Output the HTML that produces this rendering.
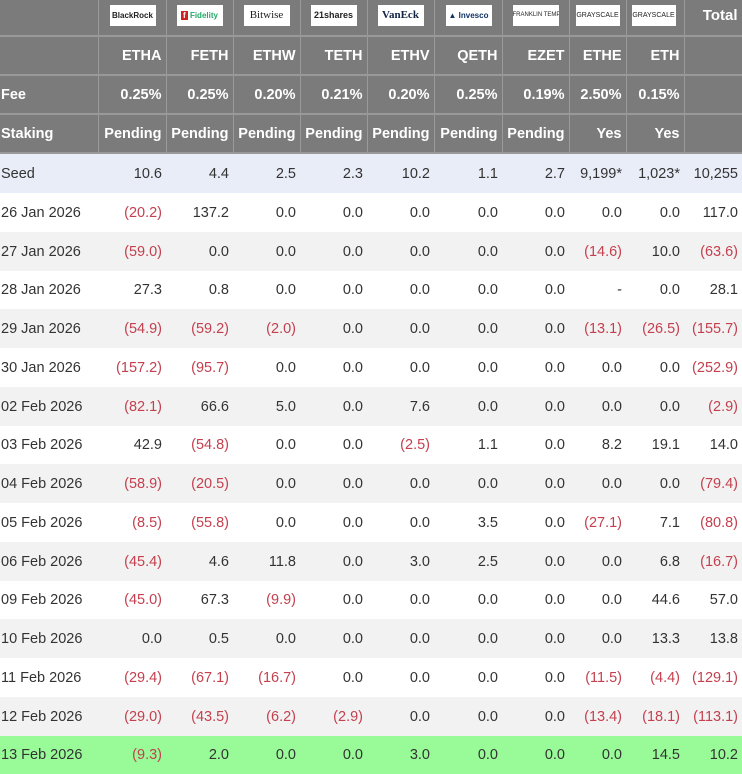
<!DOCTYPE html>
<html><head><meta charset="utf-8"><style>
body{margin:0;width:742px;height:773px;overflow:hidden;background:#fff;font-family:"Liberation Sans",Arial,sans-serif;}
table{border-collapse:collapse;table-layout:fixed;width:742px;}
td{padding:0 4px 0 0;text-align:right;font-size:14.5px;color:#333;white-space:nowrap;overflow:hidden;line-height:16px;}
td:first-child{text-align:left;padding-left:1px;}
tr.h td{background:#7b7b7b;color:#fff;font-weight:bold;border-right:1px solid #9a9a9a;border-bottom:2px solid #999;font-size:14.5px;}
tr.logo td{height:27px;vertical-align:top;padding-top:5px;}
tr.h2 td{height:37px;}
tr.d td{height:39px;}
tr.d.s td{height:38px;}
tr.d:nth-child(odd) td{background:#f2f2f2;}
tr.seed td{background:#e9edf7 !important;}
tr.last td{background:#98fb98 !important;}
.r{color:#c4404f;}
.lg{display:inline-block;background:#fff;width:46px;height:21px;font-size:8px;line-height:21px;text-align:center;color:#222;font-weight:bold;margin-right:6px;overflow:hidden;vertical-align:top;}
</style></head><body>
<table>
<colgroup><col style="width:98px"><col style="width:68px"><col style="width:67px"><col style="width:67px"><col style="width:67px"><col style="width:67px"><col style="width:68px"><col style="width:67px"><col style="width:57px"><col style="width:58px"><col style="width:58px"></colgroup>
<tr class="h logo"><td></td><td><span class="lg">BlackRock</span></td><td><span class="lg" style="color:#2a6"><b style="background:#c22;color:#fff;padding:0 2px">f</b> Fidelity</span></td><td><span class="lg" style="font-family:'Liberation Serif';font-size:11px;font-weight:normal">Bitwise</span></td><td><span class="lg" style="font-size:9px">21shares</span></td><td><span class="lg" style="color:#124;font-family:'Liberation Serif';font-size:11px">VanEck</span></td><td><span class="lg" style="color:#136">▲ Invesco</span></td><td><span class="lg" style="font-size:6px;font-weight:normal">FRANKLIN TEMPLETON</span></td><td><span class="lg" style="font-size:7px;font-weight:normal;width:44px;margin-right:2px">GRAYSCALE</span></td><td><span class="lg" style="font-size:7px;font-weight:normal;width:44px;margin-right:4px">GRAYSCALE</span></td><td style="font-size:15px;padding-top:8px">Total</td></tr>
<tr class="h h2"><td></td><td>ETHA</td><td>FETH</td><td>ETHW</td><td>TETH</td><td>ETHV</td><td>QETH</td><td>EZET</td><td>ETHE</td><td>ETH</td><td></td></tr>
<tr class="h h2"><td>Fee</td><td>0.25%</td><td>0.25%</td><td>0.20%</td><td>0.21%</td><td>0.20%</td><td>0.25%</td><td>0.19%</td><td>2.50%</td><td>0.15%</td><td></td></tr>
<tr class="h h2"><td>Staking</td><td>Pending</td><td>Pending</td><td>Pending</td><td>Pending</td><td>Pending</td><td>Pending</td><td>Pending</td><td>Yes</td><td>Yes</td><td></td></tr>
</table>
<table>
<colgroup><col style="width:98px"><col style="width:68px"><col style="width:67px"><col style="width:67px"><col style="width:67px"><col style="width:67px"><col style="width:68px"><col style="width:67px"><col style="width:57px"><col style="width:58px"><col style="width:58px"></colgroup>
<tr class="d seed"><td>Seed</td><td>10.6</td><td>4.4</td><td>2.5</td><td>2.3</td><td>10.2</td><td>1.1</td><td>2.7</td><td>9,199*</td><td>1,023*</td><td>10,255</td></tr>
<tr class="d"><td>26 Jan 2026</td><td class="r">(20.2)</td><td>137.2</td><td>0.0</td><td>0.0</td><td>0.0</td><td>0.0</td><td>0.0</td><td>0.0</td><td>0.0</td><td>117.0</td></tr>
<tr class="d"><td>27 Jan 2026</td><td class="r">(59.0)</td><td>0.0</td><td>0.0</td><td>0.0</td><td>0.0</td><td>0.0</td><td>0.0</td><td class="r">(14.6)</td><td>10.0</td><td class="r">(63.6)</td></tr>
<tr class="d s"><td>28 Jan 2026</td><td>27.3</td><td>0.8</td><td>0.0</td><td>0.0</td><td>0.0</td><td>0.0</td><td>0.0</td><td>-</td><td>0.0</td><td>28.1</td></tr>
<tr class="d"><td>29 Jan 2026</td><td class="r">(54.9)</td><td class="r">(59.2)</td><td class="r">(2.0)</td><td>0.0</td><td>0.0</td><td>0.0</td><td>0.0</td><td class="r">(13.1)</td><td class="r">(26.5)</td><td class="r">(155.7)</td></tr>
<tr class="d"><td>30 Jan 2026</td><td class="r">(157.2)</td><td class="r">(95.7)</td><td>0.0</td><td>0.0</td><td>0.0</td><td>0.0</td><td>0.0</td><td>0.0</td><td>0.0</td><td class="r">(252.9)</td></tr>
<tr class="d"><td>02 Feb 2026</td><td class="r">(82.1)</td><td>66.6</td><td>5.0</td><td>0.0</td><td>7.6</td><td>0.0</td><td>0.0</td><td>0.0</td><td>0.0</td><td class="r">(2.9)</td></tr>
<tr class="d s"><td>03 Feb 2026</td><td>42.9</td><td class="r">(54.8)</td><td>0.0</td><td>0.0</td><td class="r">(2.5)</td><td>1.1</td><td>0.0</td><td>8.2</td><td>19.1</td><td>14.0</td></tr>
<tr class="d"><td>04 Feb 2026</td><td class="r">(58.9)</td><td class="r">(20.5)</td><td>0.0</td><td>0.0</td><td>0.0</td><td>0.0</td><td>0.0</td><td>0.0</td><td>0.0</td><td class="r">(79.4)</td></tr>
<tr class="d"><td>05 Feb 2026</td><td class="r">(8.5)</td><td class="r">(55.8)</td><td>0.0</td><td>0.0</td><td>0.0</td><td>3.5</td><td>0.0</td><td class="r">(27.1)</td><td>7.1</td><td class="r">(80.8)</td></tr>
<tr class="d"><td>06 Feb 2026</td><td class="r">(45.4)</td><td>4.6</td><td>11.8</td><td>0.0</td><td>3.0</td><td>2.5</td><td>0.0</td><td>0.0</td><td>6.8</td><td class="r">(16.7)</td></tr>
<tr class="d s"><td>09 Feb 2026</td><td class="r">(45.0)</td><td>67.3</td><td class="r">(9.9)</td><td>0.0</td><td>0.0</td><td>0.0</td><td>0.0</td><td>0.0</td><td>44.6</td><td>57.0</td></tr>
<tr class="d"><td>10 Feb 2026</td><td>0.0</td><td>0.5</td><td>0.0</td><td>0.0</td><td>0.0</td><td>0.0</td><td>0.0</td><td>0.0</td><td>13.3</td><td>13.8</td></tr>
<tr class="d"><td>11 Feb 2026</td><td class="r">(29.4)</td><td class="r">(67.1)</td><td class="r">(16.7)</td><td>0.0</td><td>0.0</td><td>0.0</td><td>0.0</td><td class="r">(11.5)</td><td class="r">(4.4)</td><td class="r">(129.1)</td></tr>
<tr class="d"><td>12 Feb 2026</td><td class="r">(29.0)</td><td class="r">(43.5)</td><td class="r">(6.2)</td><td class="r">(2.9)</td><td>0.0</td><td>0.0</td><td>0.0</td><td class="r">(13.4)</td><td class="r">(18.1)</td><td class="r">(113.1)</td></tr>
<tr class="d last s"><td>13 Feb 2026</td><td class="r">(9.3)</td><td>2.0</td><td>0.0</td><td>0.0</td><td>3.0</td><td>0.0</td><td>0.0</td><td>0.0</td><td>14.5</td><td>10.2</td></tr>
</table>
</body></html>
